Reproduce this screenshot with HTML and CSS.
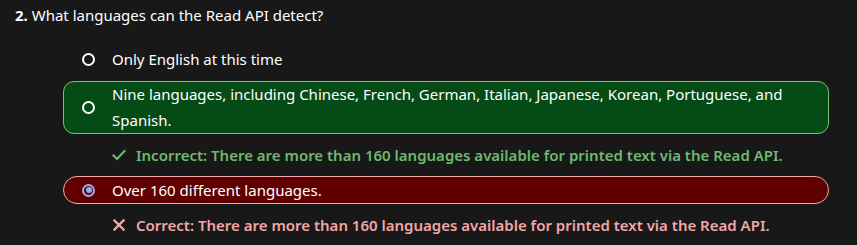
FILE: index.html
```html
<!DOCTYPE html>
<html lang="en">
<head>
<meta charset="utf-8">
<title>Quiz</title>
<link rel="stylesheet" href="styles.css">
</head>
<body>
<div class="quiz">
  <div class="question"><span class="num">2.</span> What languages can the Read API detect?</div>
  <div class="options">
    <div class="option">
      <span class="radio"></span>
      <span class="label">Only English at this time</span>
    </div>
    <div class="option correct-box">
      <span class="radio"></span>
      <span class="label">Nine languages, including Chinese, French, German, Italian, Japanese, Korean, Portuguese, and Spanish.</span>
    </div>
    <div class="feedback good">
      <svg class="ficon" viewBox="0 0 14 14" width="14" height="14"><path d="M1.5 7.5 L5 11 L12.5 3" fill="none" stroke="currentColor" stroke-width="2.2" stroke-linecap="square"/></svg>
      <span>Incorrect: There are more than 160 languages available for printed text via the Read API.</span>
    </div>
    <div class="option wrong-box">
      <span class="radio checked"></span>
      <span class="label">Over 160 different languages.</span>
    </div>
    <div class="feedback bad">
      <svg class="ficon" viewBox="0 0 14 14" width="14" height="14"><path d="M2.5 2.5 L11.5 11.5 M11.5 2.5 L2.5 11.5" fill="none" stroke="currentColor" stroke-width="2.4" stroke-linecap="square"/></svg>
      <span>Correct: There are more than 160 languages available for printed text via the Read API.</span>
    </div>
  </div>
</div>
</body>
</html>
```
FILE: styles.css
```css
html, body {
  margin: 0;
  padding: 0;
  background: #181818;
  color: #ffffff;
  font-family: "Noto Sans", "Open Sans", sans-serif;
  font-size: 15px;
}
.quiz {
  padding: 2px 0 0 15px;
}
.question {
  line-height: 26px;
}
.question .num {
  font-weight: 700;
}
.options {
  margin: 16px 0 0 48px;
  width: 766px;
}
.option {
  display: flex;
  align-items: center;
  padding: 0 40px 0 18px;
  line-height: 28px;
  margin-bottom: 7px;
  border: 1px solid transparent;
}
.radio {
  flex: none;
  box-sizing: border-box;
  width: 13px;
  height: 13px;
  border: 2px solid #ffffff;
  border-radius: 50%;
  margin-right: 17px;
  position: relative;
}
.radio.checked {
  border-color: #a9a6f0;
}
.radio.checked::after {
  content: "";
  position: absolute;
  left: 1.5px;
  top: 1.5px;
  width: 6px;
  height: 6px;
  border-radius: 50%;
  background: #7ab8ec;
}
.label {
  flex: 1;
}
.correct-box {
  background: #054b16;
  border-color: #74c476;
  border-radius: 11px;
  line-height: 25.5px;
  margin-bottom: 0;
}
.wrong-box {
  background: #600000;
  border-color: #f1a9a9;
  border-radius: 14px;
  line-height: 26px;
  margin-bottom: 0;
}
.feedback {
  display: flex;
  align-items: center;
  padding: 8px 0 8px 49px;
  line-height: 26px;
  font-weight: 600;
}
.feedback .ficon {
  flex: none;
  margin-right: 10px;
}
.feedback.good {
  color: #6cba6e;
}
.feedback.bad {
  color: #f2a6a6;
}
```
